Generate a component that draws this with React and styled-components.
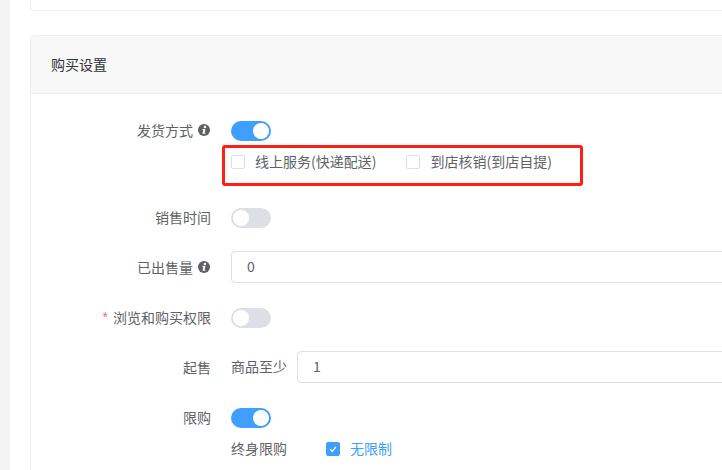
import React from 'react';
import styled, { createGlobalStyle } from 'styled-components';

const Global = createGlobalStyle`
  html, body { margin: 0; padding: 0; height: 470px; overflow: hidden; background: #fff; }
  body { font-family: "Noto Sans CJK SC", "Liberation Sans", sans-serif; font-size: 14px; color: #606266; }
`;

const Page = styled.div`
  display: flex;
  width: 722px;
  height: 470px;
  overflow: hidden;
`;
const Rail = styled.div`
  flex: 0 0 10px;
  background: #f3f3f4;
`;
const Content = styled.main`
  flex: 0 0 1000px;
  padding-left: 20px;
  box-sizing: border-box;
`;
const StubCard = styled.div`
  height: 11px;
  box-sizing: border-box;
  border: 1px solid #eeeef3;
  border-top: 0;
  border-radius: 0 0 4px 4px;
  margin-bottom: 24px;
`;
const Card = styled.section`
  border: 1px solid #eeeef3;
  border-radius: 4px;
  background: #fff;
`;
const CardHeader = styled.header`
  height: 58px;
  box-sizing: border-box;
  display: flex;
  align-items: center;
  padding: 0 0 2px 20px;
  background: #f8f8f9;
  border-bottom: 1px solid #eeeef3;
  border-radius: 4px 4px 0 0;
  color: #303133;
  font-size: 14px;
  line-height: 20px;
`;
const CardBody = styled.div`
  padding: 20px 0 40px;
  display: flex;
  flex-direction: column;
`;
const Row = styled.div`
  display: grid;
  grid-template-columns: 180px 1fr;
  column-gap: 20px;
  margin-bottom: ${p => p.$gap ?? 18}px;
`;
const Label = styled.div`
  height: 32px;
  box-sizing: border-box;
  padding-bottom: 1px;
  display: flex;
  align-items: center;
  justify-content: flex-end;
  color: #606266;
  line-height: 20px;
  white-space: nowrap;
`;
const InfoMark = styled.svg`
  width: 12px;
  height: 12px;
  margin: 0 1px 0 5px;
  flex: none;
`;
const Required = styled.span`
  color: #f56c6c;
  font-family: "Liberation Sans", sans-serif;
  margin-right: 5px;
`;
const Control = styled.div`
  display: flex;
  flex-direction: column;
  min-width: 0;
`;
const Line = styled.div`
  height: 32px;
  display: flex;
  align-items: center;
  gap: 10px;
`;
const Lead = styled.span`
  padding-bottom: 2px;
  line-height: 20px;
  white-space: nowrap;
`;
const Track = styled.span`
  position: relative;
  width: 40px;
  height: 20px;
  margin-top: 2px;
  border-radius: 10px;
  background: ${p => (p.$on ? '#409eff' : '#dcdfe6')};
  display: block;
`;
const Knob = styled.span`
  position: absolute;
  top: 2px;
  left: ${p => (p.$on ? '22px' : '2px')};
  width: 16px;
  height: 16px;
  border-radius: 50%;
  background: #fff;
`;
const TextInput = styled.input`
  flex: 1;
  min-width: 0;
  height: 32px;
  box-sizing: border-box;
  border: 1px solid #dcdfe6;
  border-radius: 4px;
  padding: 0 15px 2px;
  font: inherit;
  color: #606266;
  outline: none;
`;
const CheckGroup = styled.div`
  position: relative;
  height: 34px;
  margin-top: -1px;
  padding-bottom: 4px;
  display: flex;
  align-items: center;
  gap: 30px;
`;
const Highlight = styled.div`
  position: absolute;
  left: -9px;
  top: 0;
  width: 361px;
  height: 41px;
  box-sizing: border-box;
  border: 3px solid #ff2015;
  border-radius: 3px;
  pointer-events: none;
`;
const Check = styled.label`
  display: inline-flex;
  align-items: center;
  gap: 10px;
  padding-bottom: 2px;
  line-height: 20px;
  color: ${p => (p.$on ? '#409eff' : '#606266')};
  white-space: nowrap;
`;
const Box = styled.span`
  width: 14px;
  height: 14px;
  margin-top: 2px;
  box-sizing: border-box;
  border: 1px solid ${p => (p.$on ? '#409eff' : '#dcdfe6')};
  background: ${p => (p.$on ? '#409eff' : '#fff')};
  border-radius: 2px;
  display: flex;
  align-items: center;
  justify-content: center;
`;
const SubLine = styled.div`
  height: 32px;
  display: flex;
  align-items: center;
  gap: 39px;
`;

const Info = () => (
  <InfoMark viewBox="0 0 12 12" aria-hidden="true">
    <circle cx="6" cy="6" r="6" fill="#5f6066" />
    <circle cx="6.9" cy="3" r="1.2" fill="#fff" />
    <path d="M4.5 5h2.9L6.6 8.7h.9l-.2 1H4.4l.9-3.8h-1z" fill="#fff" />
  </InfoMark>
);
const Toggle = ({ on }) => (
  <Track $on={on}><Knob $on={on} /></Track>
);
const Tick = () => (
  <svg width="10" height="10" viewBox="0 0 10 10" aria-hidden="true">
    <path d="M2 5.2l2.1 2.1L8 3" fill="none" stroke="#fff" strokeWidth="1.2" />
  </svg>
);

export default function App() {
  return (
    <Page>
      <Global />
      <Rail />
      <Content>
        <StubCard />
        <Card>
          <CardHeader>购买设置</CardHeader>
          <CardBody>
            <Row>
              <Label>发货方式<Info /></Label>
              <Control>
                <Line><Toggle on /></Line>
                <CheckGroup>
                  <Check><Box />线上服务(快递配送)</Check>
                  <Check><Box />到店核销(到店自提)</Check>
                  <Highlight />
                </CheckGroup>
              </Control>
            </Row>
            <Row>
              <Label>销售时间</Label>
              <Line><Toggle /></Line>
            </Row>
            <Row>
              <Label>已出售量<Info /></Label>
              <Line><TextInput readOnly value="0" /></Line>
            </Row>
            <Row>
              <Label><Required>*</Required>浏览和购买权限</Label>
              <Line><Toggle /></Line>
            </Row>
            <Row>
              <Label>起售</Label>
              <Line><Lead>商品至少</Lead><TextInput readOnly value="1" /></Line>
            </Row>
            <Row $gap={0}>
              <Label>限购</Label>
              <Control>
                <Line><Toggle on /></Line>
                <SubLine>
                  <Lead>终身限购</Lead>
                  <Check $on><Box $on><Tick /></Box>无限制</Check>
                </SubLine>
              </Control>
            </Row>
          </CardBody>
        </Card>
      </Content>
    </Page>
  );
}
